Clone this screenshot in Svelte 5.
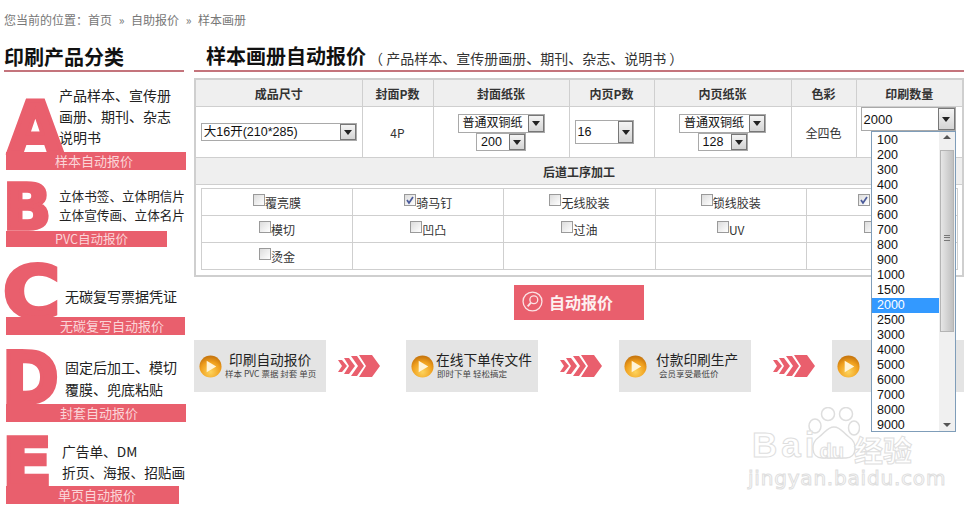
<script>
	const steps = [
		{ title: '印刷自动报价', sub: '样本 PVC 票据 封套 单页', gap: 7, shift: -4 },
		{ title: '在线下单传文件', sub: '即时下单 轻松搞定', gap: 2, shift: 1 },
		{ title: '付款印刷生产', sub: '会员享受最低价', gap: 9, shift: 3 },
		{ title: '', sub: '', gap: 0, shift: 0 }
	];
	const qty = [100, 200, 300, 400, 500, 600, 700, 800, 900, 1000, 1500, 2000, 2500, 3000, 4000, 5000, 6000, 7000, 8000, 9000];
	// last column labels sit behind the open dropdown, only their width is kept
	const finishes = [
		[{ label: '覆亮膜' }, { label: '骑马钉', on: true }, { label: '无线胶装' }, { label: '锁线胶装' }, { on: true, hidden: 36 }],
		[{ label: '模切' }, { label: '凹凸' }, { label: '过油' }, { label: 'UV' }, { hidden: 24 }],
		[{ label: '烫金' }, null, null, null, null]
	];
</script>

<div class="page">
	<div class="crumb">您当前的位置：首页<span class="sep">»</span>自助报价<span class="sep">»</span>样本画册</div>
	<div class="cols">
		<aside class="side">
			<h2 class="side-title">印刷产品分类</h2>

			<div class="cat cat-a">
				<div class="cat-top">
					<span class="letter">A</span>
					<p>产品样本、宣传册<br />画册、期刊、杂志<br />说明书</p>
				</div>
				<div class="bar">样本自动报价</div>
			</div>
			<div class="cat cat-b">
				<div class="cat-top">
					<span class="letter">B</span>
					<p>立体书签、立体明信片<br />立体宣传画、立体名片</p>
				</div>
				<div class="bar">PVC自动报价</div>
			</div>
			<div class="cat cat-c">
				<div class="cat-top">
					<span class="letter">C</span>
					<p>无碳复写票据凭证</p>
				</div>
				<div class="bar">无碳复写自动报价</div>
			</div>
			<div class="cat cat-d">
				<div class="cat-top">
					<span class="letter">D</span>
					<p>固定后加工、模切<br />覆膜、兜底粘贴</p>
				</div>
				<div class="bar">封套自动报价</div>
			</div>
			<div class="cat cat-e">
				<div class="cat-top">
					<span class="letter">E</span>
					<p>广告单、DM<br />折页、海报、招贴画</p>
				</div>
				<div class="bar">单页自动报价</div>
			</div>
		</aside>

		<main class="main">
			<div class="main-head">
				<h1>样本画册自动报价</h1>
				<span>（ 产品样本、宣传册画册、期刊、杂志、说明书 ）</span>
			</div>

			<table class="quote">
				<colgroup>
					<col style="width:167px" /><col style="width:71px" /><col style="width:136px" /><col style="width:85px" /><col style="width:137px" /><col style="width:65px" /><col />
				</colgroup>
				<tbody>
					<tr class="head">
						<th>成品尺寸</th><th>封面P数</th><th>封面纸张</th><th>内页P数</th><th>内页纸张</th><th>色彩</th><th>印刷数量</th>
					</tr>
					<tr class="vals">
						<td>
							<div class="sel sel-size"><span>大16开(210*285)</span><i></i></div>
						</td>
						<td>4P</td>
						<td>
							<div class="sel sel-paper"><span>普通双铜纸</span><i></i></div>
							<div class="sel sel-gram"><span>200</span><i></i></div>
						</td>
						<td>
							<div class="sel sel-pages"><span>16</span><i></i></div>
						</td>
						<td>
							<div class="sel sel-paper"><span>普通双铜纸</span><i></i></div>
							<div class="sel sel-gram"><span>128</span><i></i></div>
						</td>
						<td>全四色</td>
						<td class="qty-cell">
							<div class="sel sel-qty"><span>2000</span><i></i></div>
						</td>
					</tr>
					<tr class="head">
						<th colspan="7">后道工序加工</th>
					</tr>
					<tr>
						<td colspan="7" class="finish-cell">
							<table class="finish">
								<tbody>
									{#each finishes as row}
										<tr>
											{#each row as item}
												<td>
													{#if item}
														<span class="check">
															{#if item.on}
																<svg viewBox="0 0 10 10" width="10" height="10"><path d="M2 5l2 3 4-6" fill="none" stroke="#4a5a9a" stroke-width="1.7" /></svg>
															{/if}
														</span>{item.label ?? ''}{#if item.hidden}<span class="spacer" style="width:{item.hidden}px"></span>{/if}
													{/if}
												</td>
											{/each}
										</tr>
									{/each}
								</tbody>
							</table>
						</td>
					</tr>
				</tbody>
			</table>

			<div class="btn-row">
				<div class="quote-btn">
					<svg viewBox="0 0 24 24" width="21" height="21" fill="none" stroke="#fbe3e5" stroke-width="1.5">
						<circle cx="12" cy="12" r="10.8" />
						<circle cx="13.5" cy="10" r="4.5" />
						<path d="M10.2 13.3L6.5 17.5" stroke-width="2.2" />
					</svg>
					<span>自动报价</span>
				</div>
			</div>

			<div class="steps">
				{#each steps as step, i}
					{#if i > 0}
						<svg class="arrow" class:first={i === 1} viewBox="0 0 42 22" width="42" height="22">
							<path fill="#e95f6d" d="M0 5h4l5 6-5 6H0l4-6zM6 3h5l6 8-6 8H6l5-8zM13 1h6l7 10-7 10h-6l7-10zM21 0h13l8 11-8 11H21l7-11z" />
						</svg>
					{/if}
					<div class="step">
						<svg class="play" viewBox="0 0 24 24" width="23" height="23">
							<defs>
								<radialGradient id="ball{i}" cx="50%" cy="75%" r="70%">
									<stop offset="0" stop-color="#fdd35c" />
									<stop offset="0.65" stop-color="#f0a01e" />
									<stop offset="1" stop-color="#c9780f" />
								</radialGradient>
							</defs>
							<circle cx="12" cy="12" r="11.5" fill="url(#ball{i})" />
							<path d="M8 6l10 6-10 6z" fill="#fff4d8" />
						</svg>
						{#if step.title}
							<div class="step-text" style="margin-left:{step.gap}px">
								<b>{step.title}</b>
								<small style="margin-left:{step.shift}px">{step.sub}</small>
							</div>
						{/if}
					</div>
				{/each}
			</div>
		</main>
	</div>

	<div class="mark">
		<svg viewBox="0 0 52 52" width="52" height="52" fill="#fff" stroke="#dedede" stroke-width="1.5">
			<ellipse cx="7" cy="19" rx="6" ry="7" />
			<ellipse cx="20" cy="7" rx="6.5" ry="6.5" />
			<ellipse cx="38" cy="7" rx="6.5" ry="6.5" />
			<ellipse cx="46" cy="21" rx="5.5" ry="7" />
			<path d="M26 20c-7 0-9 6-15 10C2 36 3 51 14 51h24c11 0 12-15 3-21-6-4-8-10-15-10z" />
		</svg>
		<div class="mark-top"><span>Bai</span><span class="mark-du">du</span><span class="mark-cn">经验</span></div>
		<div class="mark-url">jingyan.baidu.com</div>
	</div>

	<div class="dropdown">
		<ul>
			{#each qty as q}
				<li class:active={q === 2000}>{q}</li>
			{/each}
		</ul>
		<div class="scroll">
			<span class="up"></span>
			<div class="thumb"><em></em></div>
			<span class="down"></span>
		</div>
	</div>
</div>

<style>
	:global(body) {
		margin: 0;
		background: #fff;
	}

	.page {
		position: relative;
		width: 976px;
		height: 510px;
		overflow: hidden;
		font-family: "Noto Sans CJK SC", "Liberation Sans", sans-serif;
		color: #222;
	}

	.crumb {
		padding: 11px 0 0 4px;
		height: 28px;
		font-size: 12px;
		line-height: 17px;
		color: #777;
	}

	.sep {
		display: inline-block;
		width: 19px;
		text-align: center;
	}

	.cols {
		display: flex;
		padding-left: 4px;
		gap: 10px;
	}

	.side {
		width: 180px;
		flex-shrink: 0;
	}

	.side-title {
		margin: 0;
		height: 33px;
		box-sizing: border-box;
		padding-top: 4px;
		font-size: 20px;
		line-height: 28px;
		font-weight: 700;
		color: #111;
		border-bottom: 2px solid #c4747c;
		white-space: nowrap;
	}

	.cat {
		margin-left: 2px;
	}

	.cat-top {
		display: flex;
		align-items: flex-start;
	}

	.cat p {
		margin: 0;
		font-size: 14px;
		color: #222;
		white-space: nowrap;
	}

	.letter {
		display: block;
		flex-shrink: 0;
		font-family: "DejaVu Sans", sans-serif;
		font-weight: 700;
		font-size: 72px;
		line-height: 55px;
		height: 55px;
		color: #e95f6d;
		-webkit-text-stroke: 4px #e95f6d;
		transform-origin: 0 50%;
	}

	.bar {
		height: 18px;
		background: #e95f6d;
		color: #fbd5d8;
		font-size: 13px;
		line-height: 18px;
		white-space: nowrap;
		box-sizing: border-box;
		position: relative;
	}

	.cat-a { margin-top: 25px; }
	.cat-a .letter { width: 53px; transform: translate(2px, 3px) scale(0.98, 0.98); }
	.cat-a p { line-height: 21px; margin-top: -12px; }
	.cat-a .bar { width: 180px; padding-left: 49px; }

	.cat-b { margin-top: 12px; }
	.cat-b .cat-top { height: 49px; }
	.cat-b .letter { width: 53px; height: 49px; line-height: 49px; transform: translate(-3px, 1px) scale(0.88, 0.86); }
	.cat-b p { line-height: 19px; margin-top: 4px; font-size: 12.6px; }
	.cat-b .bar { width: 161px; height: 16px; line-height: 16px; padding-left: 49px; font-size: 12.5px; }

	.cat-c { margin-top: 15px; }
	.cat-c .letter { width: 59px; transform: translate(-3px, 3px) scale(1.08, 0.98); }
	.cat-c p { margin-top: 24px; line-height: 21px; }
	.cat-c .bar { width: 179px; padding-left: 54px; }

	.cat-d { margin-top: 14px; }
	.cat-d .letter { width: 59px; transform: translate(-4px, 2px) scale(0.95, 1); }
	.cat-d p { line-height: 22px; margin-top: 7px; }
	.cat-d .bar { width: 180px; padding-left: 54px; }

	.cat-e { margin-top: 13px; }
	.cat-e .cat-top { height: 51px; }
	.cat-e .letter { width: 56px; height: 51px; line-height: 51px; transform: translate(-4px, 2px) scale(1.02, 0.92); }
	.cat-e p { line-height: 21px; margin-top: 6px; font-size: 13.7px; }
	.cat-e .bar { width: 173px; padding-left: 52px; }

	.main {
		width: 770px;
		flex-shrink: 0;
	}

	.main-head {
		height: 33px;
		box-sizing: border-box;
		padding: 3px 0 0 12px;
		border-bottom: 2px solid #c4747c;
		display: flex;
		align-items: baseline;
		gap: 3px;
		white-space: nowrap;
	}

	.main-head h1 {
		margin: 0;
		font-size: 20px;
		line-height: 28px;
		font-weight: 700;
		color: #111;
	}

	.main-head span {
		font-size: 14px;
		color: #333;
	}

	.quote {
		margin-top: 6px;
		width: 770px;
		table-layout: fixed;
		border-collapse: collapse;
		border: 2px solid #cfcfcf;
		font-size: 12px;
	}

	.quote > tbody > tr > td,
	.quote > tbody > tr > th {
		border: 1px solid #cfcfcf;
		padding: 0;
		text-align: center;
	}

	.quote .head th {
		height: 26px;
		background: #efefef;
		font-size: 12px;
		font-weight: 700;
		color: #333;
	}

	.vals td {
		height: 50px;
		color: #333;
	}

	.sel {
		display: flex;
		align-items: stretch;
		box-sizing: border-box;
		margin: 0 auto;
		background: #fff;
		border: 1px solid #a9a9a9;
		font-family: "Liberation Sans", "Noto Sans CJK SC", sans-serif;
		font-size: 12.5px;
		text-align: left;
		color: #111;
	}

	.sel span {
		flex: 1;
		padding-left: 2px;
		white-space: nowrap;
		overflow: hidden;
	}

	.sel i {
		position: relative;
		width: 16px;
		background: linear-gradient(#f4f4f4, #d4d4d4);
		border: 1px solid #777;
		box-sizing: border-box;
		flex-shrink: 0;
	}

	.sel i::after {
		content: "";
		position: absolute;
		left: 3px;
		top: 50%;
		margin-top: -2px;
		border: 4px solid transparent;
		border-top: 5px solid #222;
		border-bottom: 0;
	}

	.sel-size { width: 156px; height: 18px; line-height: 16px; }
	.sel-paper { width: 87px; height: 19px; line-height: 17px; font-size: 12px; }
	.sel-paper span { padding-left: 4px; }
	.sel-gram { width: 50px; height: 18px; line-height: 16px; }
	.sel-gram span { padding-left: 4px; }
	.sel-pages { width: 59px; height: 24px; line-height: 22px; margin-left: 5px; }
	.sel-pages i { width: 15px; }

	.qty-cell { position: relative; vertical-align: top; }
	.sel-qty { width: 95px; height: 24px; line-height: 24px; margin: 0 0 0 4px; font-size: 13px; }
	.sel-qty i { width: 17px; }

	.finish-cell {
		height: 84px;
		padding: 3px 0 3px 5px !important;
		text-align: left !important;
		vertical-align: top;
	}

	.finish {
		width: 757px;
		table-layout: fixed;
		border-collapse: collapse;
		border: 1px solid #cfcfcf;
	}

	.finish td {
		height: 26px;
		border: 1px solid #cfcfcf;
		text-align: center;
		font-size: 12px;
		line-height: 16px;
		color: #333;
		padding: 0;
		white-space: nowrap;
	}

	.check {
		display: inline-block;
		width: 10px;
		height: 10px;
		vertical-align: 2px;
		border: 1px solid #9a9a9a;
		background: linear-gradient(135deg, #dcdcdc, #fff);
	}

	.check svg { display: block; }

	.spacer { display: inline-block; }

	.btn-row {
		display: flex;
		justify-content: center;
		margin-top: 8px;
	}

	.quote-btn {
		width: 130px;
		height: 35px;
		display: flex;
		align-items: center;
		box-sizing: border-box;
		padding: 0 0 2px 8px;
		gap: 6px;
		background: #e95f6d;
		color: #fdf0f0;
		font-size: 16px;
		line-height: 30px;
		font-weight: 700;
	}

	.steps {
		display: flex;
		align-items: center;
		margin-top: 20px;
	}

	.arrow {
		flex-shrink: 0;
		margin: 0 17px 0 22px;
	}

	.arrow.first {
		margin: 0 26px 0 12px;
	}

	.step {
		width: 132px;
		height: 52px;
		flex-shrink: 0;
		background: #e4e4e4;
		display: flex;
		align-items: center;
		padding-left: 5px;
		box-sizing: border-box;
		overflow: hidden;
	}

	.play { flex-shrink: 0; }

	.step-text {
		display: flex;
		flex-direction: column;
		align-items: flex-start;
		white-space: nowrap;
		margin-top: -3px;
	}

	.step-text b {
		display: block;
		font-weight: 400;
		font-size: 13.7px;
		line-height: 18px;
		color: #222;
	}

	.step-text small {
		display: block;
		font-size: 8.5px;
		line-height: 11px;
		color: #444;
	}

	.dropdown {
		position: absolute;
		left: 871px;
		top: 131px;
		width: 85px;
		height: 301px;
		box-sizing: border-box;
		border: 1px solid #7f9db9;
		background: #fff;
		display: flex;
		overflow: hidden;
	}

	.dropdown ul {
		list-style: none;
		margin: 0;
		padding: 1px 0 0;
		flex: 1;
		font-family: "Liberation Sans", sans-serif;
		font-size: 12.5px;
		color: #111;
	}

	.dropdown li {
		height: 15px;
		line-height: 15px;
		padding-left: 5px;
	}

	.dropdown li.active {
		background: #3399ff;
		color: #fff;
	}

	.scroll {
		position: relative;
		width: 16px;
		background: #f0f0f0;
		flex-shrink: 0;
	}

	.scroll .up,
	.scroll .down {
		position: absolute;
		left: 4px;
		border: 4px solid transparent;
	}

	.scroll .up { top: 3px; border-bottom: 4px solid #555; border-top: 0; }
	.scroll .down { bottom: 4px; border-top: 4px solid #555; border-bottom: 0; }

	.thumb {
		position: absolute;
		left: 1px;
		top: 18px;
		width: 14px;
		height: 182px;
		box-sizing: border-box;
		border: 1px solid #b4b4b4;
		background: linear-gradient(90deg, #e6e6e6, #c0c0c0);
	}

	.thumb em {
		position: absolute;
		left: 3px;
		top: 84px;
		width: 6px;
		height: 6px;
		border-top: 1px solid #777;
		border-bottom: 1px solid #777;
		box-sizing: border-box;
	}

	.thumb em::after {
		content: "";
		position: absolute;
		left: 0;
		top: 1px;
		width: 6px;
		height: 1px;
		background: #777;
	}

	.mark {
		position: absolute;
		left: 748px;
		top: 407px;
		width: 180px;
		height: 80px;
		pointer-events: none;
	}

	.mark svg {
		position: absolute;
		left: 60px;
		top: 0;
	}

	.mark-top {
		position: absolute;
		left: 4px;
		top: 18px;
		height: 40px;
		font-family: "Liberation Sans", sans-serif;
		font-size: 35px;
		line-height: 40px;
		font-weight: 700;
		letter-spacing: 4px;
		color: #fff;
		-webkit-text-stroke: 1px #dedede;
		white-space: nowrap;
		display: flex;
	}

	.mark-du {
		margin-left: 1px;
		font-size: 20px;
		line-height: 52px;
		letter-spacing: 0;
	}

	.mark-cn {
		margin: 8px 0 0 10px;
		font-family: "Noto Sans CJK SC", sans-serif;
		font-size: 29px;
		line-height: 32px;
		letter-spacing: 0;
	}

	.mark-url {
		position: absolute;
		left: 0;
		top: 59px;
		font-family: "DejaVu Sans", sans-serif;
		font-size: 20px;
		line-height: 24px;
		letter-spacing: 0.8px;
		color: #fff;
		-webkit-text-stroke: 1px #dedede;
		white-space: nowrap;
	}
</style>
